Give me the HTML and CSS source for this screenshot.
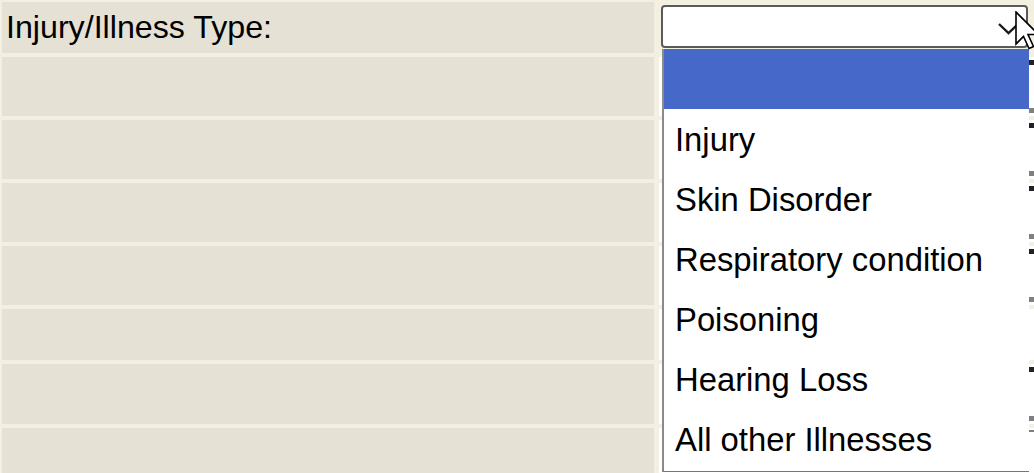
FILE: index.html
```html
<!DOCTYPE html>
<html lang="en">
<head>
    <meta charset="UTF-8">
    <title>Injury/Illness Type</title>
    <link rel="stylesheet" href="styles.css">
</head>
<body>
    <div class="form">
        <div class="label">Injury/Illness Type:</div>
        <div class="value value-first">
            <div class="select">
                <svg class="chevron" width="22" height="14" viewBox="0 0 22 14">
                    <path d="M1 2 L10.5 11 L20 2" fill="none" stroke="#1a1a1a" stroke-width="2.4"/>
                </svg>
            </div>
            <ul class="options">
                <li class="option selected">&nbsp;</li>
                <li class="option">Injury</li>
                <li class="option">Skin Disorder</li>
                <li class="option">Respiratory condition</li>
                <li class="option">Poisoning</li>
                <li class="option">Hearing Loss</li>
                <li class="option">All other Illnesses</li>
            </ul>
            <svg class="cursor" width="26" height="40" viewBox="0 0 26 40">
                <path d="M1 1 L1 33 L8.5 25.5 L14 37.5 L18.5 35.5 L13 23.5 L23.5 23.5 Z" fill="#fff" stroke="#000" stroke-width="1.6" stroke-linejoin="miter"/>
            </svg>
        </div>

        <div class="label"></div>
        <div class="value"><div class="field"></div></div>

        <div class="label"></div>
        <div class="value"><div class="field"></div></div>

        <div class="label"></div>
        <div class="value"><div class="field"></div></div>

        <div class="label"></div>
        <div class="value"><div class="field"></div></div>

        <div class="label"></div>
        <div class="value"></div>

        <div class="label"></div>
        <div class="value"><div class="field"></div></div>

        <div class="label"></div>
        <div class="value"><div class="field field-cut"></div></div>
    </div>
</body>
</html>
```

FILE: styles.css
```css
body {
    margin: 0;
    background-color: #f3efe1;
    overflow: hidden;
    font-family: "Liberation Sans", Arial, sans-serif;
}
.form {
    display: grid;
    grid-template-columns: 652px 400px;
    grid-template-rows: 51px 59px 59px 59px 59px 51px 60px 60px;
    column-gap: 5px;
    row-gap: 4px;
    padding: 2px;
}
.label {
    background-color: #e5e1d5;
    font-size: 32.2px;
    line-height: 37px;
    padding-left: 4px;
    display: flex;
    align-items: center;
    color: #000;
}
.value {
    background-color: #fff;
    display: flex;
    flex-direction: column;
}
.value-first {
    position: relative;
    background-color: transparent;
}
.select {
    margin: 3px 0 0 2px;
    width: 367px;
    height: 43px;
    box-sizing: border-box;
    border: 2px solid #5a5a5a;
    border-radius: 4px;
    background-color: #fff;
    position: relative;
}
.chevron {
    position: absolute;
    left: 335px;
    top: 15px;
}
.options {
    position: absolute;
    left: 3px;
    top: 47px;
    width: 367px;
    margin: 0;
    padding: 0 0 2px 0;
    list-style: none;
    background-color: #fff;
    border-left: 2px solid #8a8a8a;
    border-bottom: 1px solid #767676;
    box-sizing: border-box;
    z-index: 2;
}
.option {
    height: 60px;
    display: flex;
    align-items: center;
    padding-left: 11px;
    font-size: 32.8px;
    line-height: 37px;
    color: #000;
}
.option.selected {
    background-color: #4568c9;
}
.cursor {
    position: absolute;
    left: 356px;
    top: 9px;
    z-index: 3;
}
.field {
    flex: 1;
    margin: 3px 0 3px 20px;
    border-top: 5px solid #222;
    border-bottom: 5px solid #808080;
}
.field-cut {
    flex: none;
    margin: 2px 0 0 20px;
    border-top: 2px solid #808080;
    border-bottom: none;
}
```
